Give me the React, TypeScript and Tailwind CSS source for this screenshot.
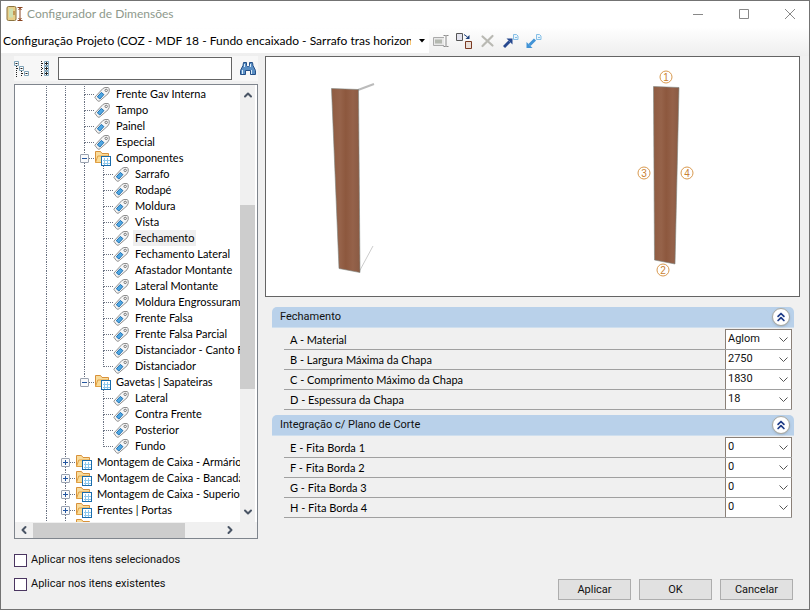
import React, { useState } from 'react';
import { ChevronDown, ChevronLeft, ChevronRight, ChevronUp, ChevronsUp } from 'lucide-react';

interface TreeRow {
  label: string;
  // one entry per 19px guide column
  guides: Guide[];
  kind: 'tag' | 'folder';
  open?: boolean;
}

type Guide = 'line' | 'tee' | 'end' | 'blank';

interface Field {
  id: string;
  label: string;
  value: string;
}

const shallow: Guide[] = ['line', 'line', 'tee'];
const deep: Guide[] = ['line', 'line', 'line', 'tee'];
const deepLast: Guide[] = ['line', 'line', 'line', 'end'];
const lastGroup: Guide[] = ['line', 'line', 'blank', 'tee'];

const rows: TreeRow[] = [
  { label: 'Frente Gav Interna', guides: shallow, kind: 'tag' },
  { label: 'Tampo', guides: shallow, kind: 'tag' },
  { label: 'Painel', guides: shallow, kind: 'tag' },
  { label: 'Especial', guides: shallow, kind: 'tag' },
  { label: 'Componentes', guides: shallow, kind: 'folder', open: true },
  { label: 'Sarrafo', guides: deep, kind: 'tag' },
  { label: 'Rodapé', guides: deep, kind: 'tag' },
  { label: 'Moldura', guides: deep, kind: 'tag' },
  { label: 'Vista', guides: deep, kind: 'tag' },
  { label: 'Fechamento', guides: deep, kind: 'tag' },
  { label: 'Fechamento Lateral', guides: deep, kind: 'tag' },
  { label: 'Afastador Montante', guides: deep, kind: 'tag' },
  { label: 'Lateral Montante', guides: deep, kind: 'tag' },
  { label: 'Moldura Engrossurame', guides: deep, kind: 'tag' },
  { label: 'Frente Falsa', guides: deep, kind: 'tag' },
  { label: 'Frente Falsa Parcial', guides: deep, kind: 'tag' },
  { label: 'Distanciador - Canto F', guides: deep, kind: 'tag' },
  { label: 'Distanciador', guides: deepLast, kind: 'tag' },
  { label: 'Gavetas | Sapateiras', guides: ['line', 'line', 'end'], kind: 'folder', open: true },
  { label: 'Lateral', guides: lastGroup, kind: 'tag' },
  { label: 'Contra Frente', guides: lastGroup, kind: 'tag' },
  { label: 'Posterior', guides: lastGroup, kind: 'tag' },
  { label: 'Fundo', guides: ['line', 'line', 'blank', 'end'], kind: 'tag' },
  { label: 'Montagem de Caixa - Armários', guides: ['line', 'tee'], kind: 'folder' },
  { label: 'Montagem de Caixa - Bancada', guides: ['line', 'tee'], kind: 'folder' },
  { label: 'Montagem de Caixa - Superior', guides: ['line', 'tee'], kind: 'folder' },
  { label: 'Frentes | Portas', guides: ['line', 'tee'], kind: 'folder' },
  { label: '', guides: ['line', 'tee'], kind: 'folder' },
];

const sections: { title: string; fields: Field[] }[] = [
  {
    title: 'Fechamento',
    fields: [
      { id: 'a', label: 'A - Material', value: 'Aglom' },
      { id: 'b', label: 'B - Largura Máxima da Chapa', value: '2750' },
      { id: 'c', label: 'C - Comprimento Máximo da Chapa', value: '1830' },
      { id: 'd', label: 'D - Espessura da Chapa', value: '18' },
    ],
  },
  {
    title: 'Integração c/ Plano de Corte',
    fields: [
      { id: 'e', label: 'E - Fita Borda 1', value: '0' },
      { id: 'f', label: 'F - Fita Borda 2', value: '0' },
      { id: 'g', label: 'G - Fita Borda 3', value: '0' },
      { id: 'h', label: 'H - Fita Borda 4', value: '0' },
    ],
  },
];

const TagIcon = () => (
  <svg width="16" height="16" viewBox="0 0 16 16" className="shrink-0">
    <path d="M.8 11.200 8.800 2.600 11 1.500h3l1.200 1v3L14 7.800l-7.600 6.600-1.400 1-1.600-.8z" fill="#f6f6f6" stroke="#8f8f8f" />
    <path d="m3.300 10.800 4-4.400 2.600 2.200-4 4.400z" fill="#4fa8e4" stroke="#1f6fb0" />
    <circle cx="12.200" cy="4.400" r="1.200" fill="#fff" stroke="#777" />
  </svg>
);

const FolderIcon = () => (
  <svg width="17" height="16" viewBox="0 0 17 16" className="shrink-0">
    <path d="M1.500 12.500v-11h5l1.500 2h6.500v3" fill="#f9dc9c" stroke="#d8913a" />
    <path d="M1.500 12.500 3.800 6h11v6.500z" fill="#fbdc96" stroke="#e0a044" />
    <rect x="7.500" y="6.500" width="9" height="9" fill="#fff" stroke="#1a6cab" />
    <path d="M10.500 8v7M13.500 8v7M9 10.500h7M9 13.500h7" stroke="#8cc8ec" />
  </svg>
);

const GuideCell: React.FC<{ guide: Guide }> = ({ guide }) => {
  const top = guide !== 'blank' ? 'border-l' : '';
  const elbow = guide === 'tee' || guide === 'end' ? 'border-b' : '';
  const bottom = guide === 'tee' || guide === 'line' ? 'border-l' : '';
  return (
    <span className="flex h-4 w-[19px] shrink-0 flex-col pl-[9px]">
      <span className={`h-[9px] border-dotted border-gray-500 ${top} ${elbow}`} />
      <span className={`h-[7px] border-dotted border-gray-500 ${bottom}`} />
    </span>
  );
};

const TreeItem: React.FC<{ row: TreeRow; selected: boolean; onSelect: () => void }> = ({ row, selected, onSelect }) => (
  <li className="flex h-4 items-center pl-[22px]">
    <span className="relative flex shrink-0">
      {row.guides.map((guide, i) => (
        <GuideCell key={i} guide={guide} />
      ))}
      {row.kind === 'folder' && (
        <button
          aria-label={row.open ? 'Recolher' : 'Expandir'}
          className="absolute top-1 right-[5px] flex h-[9px] w-[9px] items-center justify-center rounded-[1px] border border-gray-400 bg-gray-50"
        >
          <svg width="5" height="5" viewBox="0 0 5 5" stroke="#2456a0">
            <path d={row.open ? 'M0 2.5h5' : 'M0 2.5h5M2.5 0v5'} />
          </svg>
        </button>
      )}
    </span>
    <span className="flex w-5 shrink-0">{row.kind === 'folder' ? <FolderIcon /> : <TagIcon />}</span>
    <button
      onClick={onSelect}
      className={`h-4 shrink-0 px-[2px] leading-4 whitespace-nowrap ${selected ? 'bg-[#efefef]' : ''}`}
    >
      {row.label}
    </button>
  </li>
);

const TitleBar = () => (
  <header className="flex h-[26px] shrink-0 items-center bg-white pr-[3px] pl-[5px] font-['Lato',sans-serif] text-[#8e998c]">
    <svg width="17" height="18" viewBox="0 0 17 18">
      <rect x="1" y="1.5" width="9" height="14" rx="1.5" fill="#e8d08a" stroke="#8c7440" />
      <path d="M3 3.5h4v9H3z" fill="#cfe0b0" />
      <path d="M8 6v4" stroke="#a06020" />
      <path d="M11.5 2.5h5M11.5 15.5h5M14 3v12M12.5 5 14 3.2 15.5 5M12.5 13l1.5 1.8 1.5-1.8" fill="none" stroke="#8a4420" />
    </svg>
    <h1 className="ml-1 flex-1 text-[12px]">Configurador de Dimensões</h1>
    <div className="flex gap-[14px]">
      <button aria-label="Minimizar" className="flex h-6 w-8 items-center justify-center">
        <svg width="10" height="10" viewBox="0 0 10 10" stroke="#888"><path d="M0 5.5h10" /></svg>
      </button>
      <button aria-label="Maximizar" className="flex h-6 w-8 items-center justify-center">
        <svg width="10" height="10" viewBox="0 0 10 10" stroke="#888" fill="none"><path d="M.5.5h9v9h-9z" /></svg>
      </button>
      <button aria-label="Fechar" className="flex h-6 w-8 items-center justify-center">
        <svg width="10" height="10" viewBox="0 0 10 10" stroke="#888"><path d="m0 0 10 10M10 0 0 10" /></svg>
      </button>
    </div>
  </header>
);

const Toolbar = () => (
  <div className="flex h-[29px] shrink-0 items-center bg-linear-to-b from-white to-[#eeeeee] pb-[2px]">
    <div className="relative flex h-6 w-[428px] items-center bg-white">
      <select
        aria-label="Configuração"
        className="h-6 w-full appearance-none overflow-hidden bg-white pr-[18px] pl-[2px] font-['Lato',sans-serif] text-[12px] text-clip text-black"
      >
        <option>Configuração Projeto (COZ - MDF 18 - Fundo encaixado - Sarrafo tras horizontal</option>
      </select>
      <svg width="6" height="4" viewBox="0 0 6 4" className="pointer-events-none absolute right-1"><path d="M0 0h6L3 3.5z" /></svg>
    </div>
    <div className="flex gap-[7px] pl-[4px]">
      <button aria-label="Renomear">
        <svg width="16" height="16" viewBox="0 0 16 16" fill="none" stroke="#aaa">
          <path d="M11 4.5H.5v8H11" fill="#e8e8e8" />
          <path d="M2 6.5h7v4H2z" fill="#b4b8b0" stroke="none" />
          <path d="M10.5 2.5h2l.5.5.5-.5h2M10.5 13.5h2l.5-.5.5.5h2M13 3v10" stroke="#8a8a8a" />
        </svg>
      </button>
      <button aria-label="Duplicar">
        <svg width="17" height="17" viewBox="0 0 17 17" fill="none">
          <path d="M.5 1.5h6v7h-6z" fill="#e3e3ee" stroke="#555" />
          <path d="M9.5 9.5h6v7h-6z" fill="#eadfd8" stroke="#7a3a22" />
          <path d="M8 2.500 11.500 5" stroke="#1c3f7c" />
          <path d="M13.500 3v4h-4z" fill="#1c3f7c" />
        </svg>
      </button>
      <button aria-label="Excluir">
        <svg width="16" height="16" viewBox="0 0 16 16" stroke="#b9b9b3" strokeWidth="2.2" strokeLinecap="round">
          <path d="m2.5 3.5 10 9M12.5 3l-10 10" />
        </svg>
      </button>
      <button aria-label="Exportar">
        <svg width="16" height="16" viewBox="0 0 16 16" fill="none">
          <path d="m1 14 5.500-5.500" stroke="#27498f" strokeWidth="3" />
          <path d="M3.500 5.500h6v6z" fill="#27498f" />
          <path d="M10.500 1.500h3l1.500 1.500v3.500h-4.500zM12 4.500h2" fill="#eaf5fc" stroke="#86bfe6" />
        </svg>
      </button>
      <button aria-label="Importar">
        <svg width="16" height="16" viewBox="0 0 16 16" fill="none">
          <path d="m3.500 12 5.500-5.500" stroke="#4193d6" strokeWidth="3" />
          <path d="M.5 15V9l6 6z" fill="#4193d6" />
          <path d="M10.500 1.500h3l1.500 1.500v3.500h-4.500zM12 4.500h2" fill="#eaf5fc" stroke="#86bfe6" />
        </svg>
      </button>
    </div>
  </div>
);

const SearchBar = () => (
  <div className="mb-[3px] flex h-[25px] items-center bg-[#f7f7f7]">
    <button aria-label="Recolher tudo" className="mr-[10px]">
      <svg width="16" height="16" viewBox="0 0 16 16" fill="none">
        <path d="M.5.5h4v4h-4zM5.500 5.500h4v4h-4zM10.500 10.500h4v4h-4z" fill="#fff" stroke="#7fa3b8" />
        <path d="M1.500 2.500h2M6.500 7.500h2M11.500 12.500h2" stroke="#222" />
        <path d="M2.500 5v11M7.500 10v5M3 7.500h2M8 12.500h2" stroke="#222" strokeDasharray="1 1" />
      </svg>
    </button>
    <button aria-label="Expandir tudo" className="mr-[8px]">
      <svg width="10" height="16" viewBox="0 0 10 16" fill="none">
        <path d="M1.500 0v16M2 2.500h2M2 7.500h2M2 12.500h2" stroke="#222" strokeDasharray="1 1" />
        <path d="M4.500.5h4v4h-4zM4.500 5.500h4v4h-4zM4.500 10.500h4v4h-4z" fill="#fff" stroke="#7fa3b8" />
        <path d="M5 2.500h3M5 7.500h3M5 12.500h3M6.500 1v3M6.500 6v3M6.500 11v3" stroke="#222" />
      </svg>
    </button>
    <input aria-label="Pesquisar" type="text" className="h-[23px] w-0 flex-1 border border-[#646464] bg-white px-1 outline-none" />
    <button aria-label="Localizar" className="mr-[2px] ml-[8px]">
      <svg width="16" height="16" viewBox="0 0 16 16">
        <path d="M3.500 1.500h3v3l1 1h1l1-1v-3h3l.5 3 2.500 5v4h-5v-4H5.500v4h-5v-4L3 4.500z" fill="#5b8fc4" stroke="#234f87" />
        <path d="M2.500 9v4M11.500 9v4M4.500 3v3M10.500 3v3" stroke="#d9ecfa" />
      </svg>
    </button>
  </div>
);

const Tree = () => {
  const [selected, setSelected] = useState('Fechamento');
  return (
    <div className="flex min-h-0 flex-1 flex-col border border-[#7f858d] bg-white">
      <div className="flex min-h-0 flex-1 pr-[2px]">
        <ul className="h-0 min-h-full min-w-0 flex-1 overflow-hidden pt-px font-['Lato',sans-serif] text-black">
          {rows.map(row => (
            <TreeItem key={row.label} row={row} selected={row.label === selected} onSelect={() => setSelected(row.label)} />
          ))}
        </ul>
        <div className="flex w-[15px] shrink-0 flex-col items-center bg-[#f0f0f0] py-1 text-gray-600">
          <ChevronUp size={12} strokeWidth={4} />
          <div className="flex-[104]" />
          <div className="w-full flex-[183] bg-[#cdcdcd]" />
          <div className="flex-[117]" />
          <ChevronDown size={12} strokeWidth={4} />
        </div>
      </div>
      <div className="flex h-4 shrink-0 items-center bg-[#f0f0f0] pr-[21px] pl-[3px] text-gray-600">
        <ChevronLeft size={12} strokeWidth={4} />
        <div className="ml-[3px] h-[15px] flex-[152] bg-[#cdcdcd]" />
        <div className="flex-[39]" />
        <ChevronRight size={12} strokeWidth={4} />
      </div>
    </div>
  );
};

const marks = [
  { n: 1, x: 400, y: 21 },
  { n: 2, x: 397, y: 214 },
  { n: 3, x: 378, y: 117 },
  { n: 4, x: 421, y: 117 },
];

const Preview = () => (
  <div className="h-[241px] shrink-0 border border-[#646464] bg-white">
    <svg viewBox="0 0 533 239" className="h-full w-full">
      <defs>
        <linearGradient id="wood">
          <stop offset="0" stopColor="#8f5c42" />
          <stop offset=".3" stopColor="#96634a" />
          <stop offset=".5" stopColor="#8d583e" />
          <stop offset=".75" stopColor="#95624a" />
          <stop offset="1" stopColor="#895a43" />
        </linearGradient>
      </defs>
      <path d="m92 33 16-6" stroke="#bbb" strokeWidth="2" />
      <path d="m93 215 14-26" stroke="#ccc" />
      <path d="m65.500 31.500 27 1 1.500 183-21-4z" fill="url(#wood)" stroke="#7d8580" strokeWidth=".6" />
      <path d="m387.500 29.500 25.500 1-4 176.500-20.500-4z" fill="url(#wood)" stroke="#7d8580" strokeWidth=".6" />
      {marks.map(mark => (
        <g key={mark.n}>
          <circle cx={mark.x} cy={mark.y - 1} r="6" fill="#fff" stroke="#d99a50" />
          <text x={mark.x} y={mark.y + 3} textAnchor="middle" fill="#c97f32" className="font-['Liberation_Sans',sans-serif] text-[10px]">
            {mark.n}
          </text>
        </g>
      ))}
    </svg>
  </div>
);

const Section: React.FC<{ title: string; fields: Field[] }> = ({ title, fields }) => (
  <section>
    <div className="mb-[2px] flex h-[21px] items-center justify-between rounded-t-[5px] border-b border-[#cfdfee] bg-[#b9d1ea] pr-1 pl-2">
      <h2>{title}</h2>
      <button
        aria-label={`Recolher ${title}`}
        className="flex h-[18px] w-[18px] items-center justify-center rounded-full border border-[#a8a8a0] bg-white text-[#1f3c88] shadow"
      >
        <ChevronsUp size={14} strokeWidth={3} />
      </button>
    </div>
    <div className="mr-[2px] ml-3">
      {fields.map((field, i) => (
        <div key={field.id} className="flex h-5 items-center border-b border-[#a0a0a0] pl-[6px]">
          <label htmlFor={field.id} className="flex-1 pt-px font-['Lato',sans-serif] text-black">{field.label}</label>
          <div className={`relative flex w-[67px] items-center ${i === 0 ? '-mt-px' : ''}`}>
            <select
              id={field.id}
              className={`w-full appearance-none border-x border-[#8a8078] bg-white pl-[2px] ${i === 0 ? 'h-5 border-t' : 'h-[19px]'}`}
            >
              <option>{field.value}</option>
            </select>
            <svg width="9" height="5" viewBox="0 0 9 5" fill="none" stroke="#555" className="pointer-events-none absolute right-1">
              <path d="m.5.5 4 4 4-4" />
            </svg>
          </div>
        </div>
      ))}
    </div>
  </section>
);

const CheckOption: React.FC<{ label: string }> = ({ label }) => (
  <label className="flex h-6 items-center gap-1">
    <input type="checkbox" className="h-[13px] w-[13px] appearance-none border border-[#4a3560] bg-white checked:bg-[#4a3560]" />
    {label}
  </label>
);

export default function App() {
  return (
    <div className="flex h-screen flex-col border border-[#737373] bg-[#f0f0f0] font-['Roboto',sans-serif] text-[11px] text-[#111]">
      <TitleBar />
      <Toolbar />
      <main className="flex min-h-0 flex-1 pr-[9px]">
        <div className="flex w-[257px] shrink-0 flex-col pl-[13px]">
          <SearchBar />
          <Tree />
          <div className="pt-[9px] pb-[13px]">
            <CheckOption label="Aplicar nos itens selecionados" />
            <CheckOption label="Aplicar nos itens existentes" />
          </div>
        </div>
        <div className="ml-[7px] flex min-w-0 flex-1 flex-col">
          <Preview />
          <div className="mt-[10px] mr-[6px] ml-[7px] flex flex-1 flex-col gap-[5px]">
            {sections.map(section => (
              <Section key={section.title} {...section} />
            ))}
          </div>
          <div className="flex justify-end gap-2 pr-[7px] pb-[9px]">
            {['Aplicar', 'OK', 'Cancelar'].map(name => (
              <button key={name} className="h-[21px] w-[73px] border border-[#adadad] bg-[#e1e1e1] pt-px">
                {name}
              </button>
            ))}
          </div>
        </div>
      </main>
    </div>
  );
}
